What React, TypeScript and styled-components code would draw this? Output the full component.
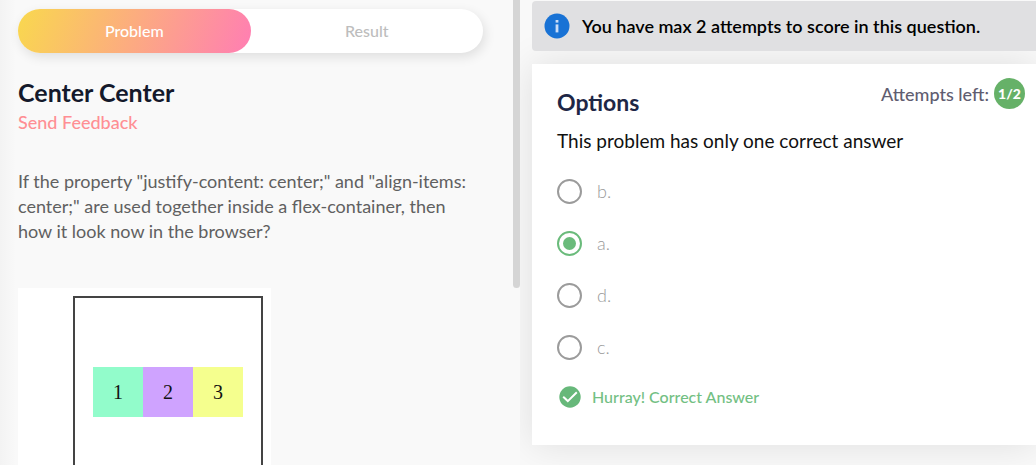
import React, { useState } from "react";
import styled, { createGlobalStyle } from "styled-components";

const GlobalStyle = createGlobalStyle`
  * { box-sizing: border-box; }
  body {
    margin: 0;
    background: #f9f9f9;
    font-family: Lato, "Liberation Sans", sans-serif;
    font-size: 18px;
    line-height: 24px;
  }
  h1, h2, p, fieldset { margin: 0; padding: 0; border: 0; }
`;

const Page = styled.main`
  display: flex;
  height: 100vh;
`;

const ProblemPane = styled.section`
  display: flex;
  flex: 0 0 calc(50% + 2px);
  min-width: 0;
  overflow: hidden;
  background: linear-gradient(to right, #f3f3f3, #f9f9f9 16px);
`;

const ProblemContent = styled.div`
  flex: 1;
  min-width: 0;
  padding: 9px 30px 32px 18px;
`;

const ScrollThumb = styled.div`
  width: 7px;
  height: 62%;
  border-radius: 0 0 4px 4px;
  background: #d5d5d5;
`;

const Tabs = styled.nav`
  display: flex;
  height: 44px;
  border-radius: 22px;
  background: #fff;
  box-shadow: 2px 4px 12px rgba(0, 0, 0, 0.11);
`;

const Tab = styled.button<{ $active?: boolean }>`
  flex: 1;
  border: 0;
  border-radius: 22px;
  background: ${(p) =>
    p.$active ? "linear-gradient(110deg, #f9d84e, #ff7eb3)" : "transparent"};
  color: ${(p) => (p.$active ? "#fff" : "#bdbdbd")};
  font: 500 16px/24px Lato, "Liberation Sans", sans-serif;
  cursor: pointer;
`;

const Title = styled.h1`
  margin-top: 25px;
  color: #14192b;
  font-size: 25px;
  font-weight: 700;
  line-height: 28px;
`;

const FeedbackLink = styled.a`
  display: block;
  margin-top: 4px;
  color: #ff8f94;
  font-weight: 500;
  text-decoration: none;
`;

const Question = styled.p`
  margin-top: 35px;
  color: #606060;
  line-height: 25px;
`;

const Figure = styled.div`
  width: 253px;
  margin-top: 44px;
  padding: 8px 8px 8px 55px;
  background: #fff;
`;

const FlexFrame = styled.div`
  display: flex;
  align-items: center;
  justify-content: center;
  height: 192px;
  border: 2px solid #444;
`;

const Box = styled.div<{ $color: string }>`
  display: flex;
  align-items: center;
  justify-content: center;
  width: 50px;
  height: 50px;
  background: ${(p) => p.$color};
  color: #111;
  font: 20px/24px "Liberation Serif", serif;
`;

const AnswerPane = styled.section`
  display: flex;
  flex: 1;
  flex-direction: column;
  gap: 13px;
  min-width: 0;
  padding: 1px 0 20px 12px;
  overflow: hidden;
`;

const Notice = styled.div`
  display: flex;
  align-items: center;
  gap: 12px;
  height: 50px;
  padding: 0 12px;
  border-radius: 4px 0 0 4px;
  background: #e0e0e2;
  color: #000;
  font-weight: 600;
  z-index: 1;
`;

const Card = styled.div`
  padding: 14px 11px 36px 25px;
  background: #fff;
  box-shadow: 0 0 36px rgba(0, 0, 0, 0.11);
`;

const CardHeader = styled.header`
  display: flex;
  align-items: flex-start;
  justify-content: space-between;
`;

const CardTitle = styled.h2`
  padding-top: 10px;
  color: #1e2746;
  font-size: 23px;
  font-weight: 700;
  line-height: 28px;
`;

const Attempts = styled.div`
  display: flex;
  align-items: center;
  gap: 5px;
  color: #5f5d70;
  font-weight: 500;
`;

const AttemptBadge = styled.span`
  display: flex;
  align-items: center;
  justify-content: center;
  width: 31px;
  height: 31px;
  border-radius: 50%;
  background: #66b168;
  color: #fff;
  font-size: 14px;
  font-weight: 900;
`;

const Hint = styled.p`
  margin-top: 13px;
  color: #111;
  font-size: 19px;
`;

const OptionList = styled.fieldset`
  display: flex;
  flex-direction: column;
  gap: 24px;
  margin-top: 24px;
`;

const Option = styled.label`
  display: flex;
  align-items: center;
  gap: 15px;
  height: 28px;
  color: #9a9a9a;
  font-weight: 300;
  cursor: pointer;
`;

const Radio = styled.input`
  appearance: none;
  display: grid;
  place-items: center;
  width: 25px;
  height: 25px;
  margin: 0;
  border: 2px solid #9b9b9b;
  border-radius: 50%;
  background: #fff;

  &:checked { border-color: #6abb7b; }
  &:checked::after {
    content: "";
    width: 13px;
    height: 13px;
    border-radius: 50%;
    background: #6abb7b;
  }
`;

const Success = styled.p`
  display: flex;
  align-items: center;
  gap: 11px;
  margin-top: 24px;
  padding-left: 2px;
  color: #73c083;
  font-size: 16px;
  font-weight: 500;
`;

const InfoIcon = () => (
  <svg width="26" height="26" viewBox="0 0 26 26" aria-hidden="true">
    <circle cx="13" cy="13" r="12.5" fill="#1872d5" />
    <rect x="11.6" y="7" width="2.8" height="2.6" fill="#c9dcf7" />
    <rect x="11.6" y="11.4" width="2.8" height="8" fill="#c9dcf7" />
  </svg>
);

const CheckIcon = () => (
  <svg width="22" height="22" viewBox="0 0 22 22" aria-hidden="true">
    <circle cx="11" cy="11" r="10.7" fill="#67b87a" />
    <path d="M4.2 10.8 8.8 15.1 17.8 6.2" fill="none" stroke="#fff" strokeWidth="2" />
  </svg>
);

const options = ["b", "a", "d", "c"];

export default function App() {
  const [answer, setAnswer] = useState("a");
  return (
    <>
      <GlobalStyle />
      <Page>
        <ProblemPane>
          <ProblemContent>
            <Tabs>
              <Tab type="button" $active>Problem</Tab>
              <Tab type="button">Result</Tab>
            </Tabs>
            <Title>Center Center</Title>
            <FeedbackLink href="#feedback">Send Feedback</FeedbackLink>
            <Question>
              If the property "justify-content: center;" and "align-items:
              center;" are used together inside a flex-container, then
              <br />
              how it look now in the browser?
            </Question>
            <Figure>
              <FlexFrame>
                <Box $color="#92fccb">1</Box>
                <Box $color="#cfa3ff">2</Box>
                <Box $color="#f5ff8e">3</Box>
              </FlexFrame>
            </Figure>
          </ProblemContent>
          <ScrollThumb />
        </ProblemPane>
        <AnswerPane>
          <Notice>
            <InfoIcon />
            <span>You have max 2 attempts to score in this question.</span>
          </Notice>
          <Card>
            <CardHeader>
              <CardTitle>Options</CardTitle>
              <Attempts>
                Attempts left: <AttemptBadge>1/2</AttemptBadge>
              </Attempts>
            </CardHeader>
            <Hint>This problem has only one correct answer</Hint>
            <OptionList aria-label="Options">
              {options.map((name) => (
                <Option key={name}>
                  <Radio
                    type="radio"
                    name="answer"
                    value={name}
                    checked={answer === name}
                    onChange={() => setAnswer(name)}
                  />
                  {name}.
                </Option>
              ))}
            </OptionList>
            <Success role="status">
              <CheckIcon />
              Hurray! Correct Answer
            </Success>
          </Card>
        </AnswerPane>
      </Page>
    </>
  );
}
